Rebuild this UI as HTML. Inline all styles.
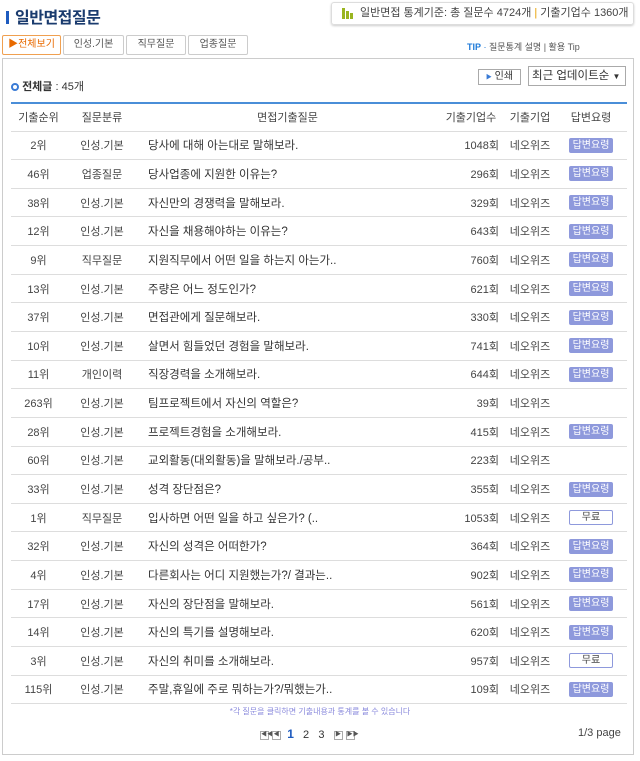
<!DOCTYPE html><html><head><meta charset="utf-8"><style>
*{margin:0;padding:0;box-sizing:border-box}
body{width:640px;height:761px;background:#fff;font-family:"Liberation Sans","Noto Sans CJK KR",sans-serif;color:#333;position:relative;overflow:hidden;font-size:11px}
.a{position:absolute}
.title{left:6px;top:4px;font-size:16px;font-weight:bold;color:#1a3b6e;letter-spacing:-0.5px}
.title:before{content:"";display:inline-block;width:3px;height:13px;background:#1e5bbf;margin-right:6px;vertical-align:-1px}
.stat{left:331px;top:2px;width:303px;height:23px;border:1px solid #ddd;border-radius:3px;box-shadow:0 1px 2px #ccc;font-size:11px;line-height:21px;padding-left:28px;color:#444;white-space:nowrap}
.tab{top:35px;height:20px;border:1px solid #ccc;border-radius:2px;font-size:10px;text-align:center;line-height:18px;color:#555}
.panel{left:2px;top:58px;width:632px;height:697px;border:1px solid #ccc}
table{position:absolute;left:11px;top:102px;width:616px;border-collapse:collapse;border-top:2px solid #4a8ed8}
th{height:28px;font-weight:normal;font-size:11px;color:#444;border-bottom:1px solid #ddd;background:#fff}
td{height:28.65px;border-bottom:1px solid #ddd;font-size:11px;color:#444;text-align:center}
td.q{text-align:left;padding-left:10px;font-size:11.5px;color:#333}
td.n{text-align:right;padding-right:6px}
.b{display:inline-block;width:44px;height:15px;line-height:15px;font-size:10px;border-radius:2px;background:#8e99dc;color:#fff;vertical-align:middle}
.f{background:#fff;border:1px solid #8e99dc;color:#444;line-height:13px}
.pg{display:inline-block;width:9px;height:9px;border:1px solid #aaa;font-size:6px;line-height:7px;text-align:center;color:#555;vertical-align:middle}
</style></head><body>
<div class="a title">일반면접질문</div>
<div class="a stat"><span class="a" style="left:10px;top:5px;width:3px;height:11px;background:#9ab520"></span><span class="a" style="left:14px;top:8px;width:3px;height:8px;background:#9ab520"></span><span class="a" style="left:18px;top:10px;width:3px;height:6px;background:#9ab520"></span>일반면접 통계기준: 총 질문수 4724개 <span style="color:#e8a000">|</span> 기출기업수 1360개</div>
<div class="a tab" style="left:2px;width:59px;border-color:#f0a050;color:#e86a00">▶전체보기</div>
<div class="a tab" style="left:63px;width:61px">인성.기본</div>
<div class="a tab" style="left:126px;width:60px">직무질문</div>
<div class="a tab" style="left:188px;width:60px">업종질문</div>
<div class="a" style="left:467px;top:40px;font-size:9px;color:#555"><b style="color:#1e7ad8">TIP</b> <span style="color:#1e7ad8">·</span> 질문통계 설명 | 활용 Tip</div>
<div class="a panel"></div>
<div class="a" style="left:11px;top:78px;font-size:11px"><span style="display:inline-block;width:8px;height:8px;border:2px solid #3a7bd5;border-radius:50%;vertical-align:-1px"></span> <b>전체글</b> : 45개</div>
<div class="a" style="left:478px;top:69px;width:43px;height:16px;border:1px solid #aaa;font-size:10px;line-height:14px;text-align:center"><span style="color:#3a7bd5;font-size:6px">▶</span> 인쇄</div>
<div class="a" style="left:528px;top:66px;width:98px;height:20px;border:1px solid #aaa;font-size:11.5px;line-height:18px;padding-left:3px;white-space:nowrap;overflow:hidden">최근 업데이트순 <span style="font-size:8px">▼</span></div>
<table>
<tr><th style="width:55px">기출순위</th><th style="width:72px">질문분류</th><th>면접기출질문</th><th style="width:68px">기출기업수</th><th style="width:50px">기출기업</th><th style="width:72px">답변요령</th></tr>
<tr><td>2위</td><td>인성.기본</td><td class="q">당사에 대해 아는대로 말해보라.</td><td class="n">1048회</td><td>네오위즈</td><td><span class="b">답변요령</span></td></tr>
<tr><td>46위</td><td>업종질문</td><td class="q">당사업종에 지원한 이유는?</td><td class="n">296회</td><td>네오위즈</td><td><span class="b">답변요령</span></td></tr>
<tr><td>38위</td><td>인성.기본</td><td class="q">자신만의 경쟁력을 말해보라.</td><td class="n">329회</td><td>네오위즈</td><td><span class="b">답변요령</span></td></tr>
<tr><td>12위</td><td>인성.기본</td><td class="q">자신을 채용해야하는 이유는?</td><td class="n">643회</td><td>네오위즈</td><td><span class="b">답변요령</span></td></tr>
<tr><td>9위</td><td>직무질문</td><td class="q">지원직무에서 어떤 일을 하는지 아는가..</td><td class="n">760회</td><td>네오위즈</td><td><span class="b">답변요령</span></td></tr>
<tr><td>13위</td><td>인성.기본</td><td class="q">주량은 어느 정도인가?</td><td class="n">621회</td><td>네오위즈</td><td><span class="b">답변요령</span></td></tr>
<tr><td>37위</td><td>인성.기본</td><td class="q">면접관에게 질문해보라.</td><td class="n">330회</td><td>네오위즈</td><td><span class="b">답변요령</span></td></tr>
<tr><td>10위</td><td>인성.기본</td><td class="q">살면서 힘들었던 경험을 말해보라.</td><td class="n">741회</td><td>네오위즈</td><td><span class="b">답변요령</span></td></tr>
<tr><td>11위</td><td>개인이력</td><td class="q">직장경력을 소개해보라.</td><td class="n">644회</td><td>네오위즈</td><td><span class="b">답변요령</span></td></tr>
<tr><td>263위</td><td>인성.기본</td><td class="q">팀프로젝트에서 자신의 역할은?</td><td class="n">39회</td><td>네오위즈</td><td></td></tr>
<tr><td>28위</td><td>인성.기본</td><td class="q">프로젝트경험을 소개해보라.</td><td class="n">415회</td><td>네오위즈</td><td><span class="b">답변요령</span></td></tr>
<tr><td>60위</td><td>인성.기본</td><td class="q">교외활동(대외활동)을 말해보라./공부..</td><td class="n">223회</td><td>네오위즈</td><td></td></tr>
<tr><td>33위</td><td>인성.기본</td><td class="q">성격 장단점은?</td><td class="n">355회</td><td>네오위즈</td><td><span class="b">답변요령</span></td></tr>
<tr><td>1위</td><td>직무질문</td><td class="q">입사하면 어떤 일을 하고 싶은가? (..</td><td class="n">1053회</td><td>네오위즈</td><td><span class="b f">무료</span></td></tr>
<tr><td>32위</td><td>인성.기본</td><td class="q">자신의 성격은 어떠한가?</td><td class="n">364회</td><td>네오위즈</td><td><span class="b">답변요령</span></td></tr>
<tr><td>4위</td><td>인성.기본</td><td class="q">다른회사는 어디 지원했는가?/ 결과는..</td><td class="n">902회</td><td>네오위즈</td><td><span class="b">답변요령</span></td></tr>
<tr><td>17위</td><td>인성.기본</td><td class="q">자신의 장단점을 말해보라.</td><td class="n">561회</td><td>네오위즈</td><td><span class="b">답변요령</span></td></tr>
<tr><td>14위</td><td>인성.기본</td><td class="q">자신의 특기를 설명해보라.</td><td class="n">620회</td><td>네오위즈</td><td><span class="b">답변요령</span></td></tr>
<tr><td>3위</td><td>인성.기본</td><td class="q">자신의 취미를 소개해보라.</td><td class="n">957회</td><td>네오위즈</td><td><span class="b f">무료</span></td></tr>
<tr><td>115위</td><td>인성.기본</td><td class="q">주말,휴일에 주로 뭐하는가?/뭐했는가..</td><td class="n">109회</td><td>네오위즈</td><td><span class="b">답변요령</span></td></tr>
</table>
<div class="a" style="left:0;width:640px;top:706px;text-align:center;font-size:8px;color:#8a8adc">*각 질문을 클릭하면 기출내용과 통계를 볼 수 있습니다</div>
<div class="a" style="left:260px;top:727px;font-size:11px"><span class="pg">◀◀</span> <span class="pg">◀</span> &nbsp;<b style="color:#1e5bbf;font-size:12px">1</b> &nbsp; 2 &nbsp; 3 &nbsp; <span class="pg">▶</span> <span class="pg">▶▶</span></div>
<div class="a" style="left:578px;top:727px;font-size:11px;color:#444">1/3 page</div>
</body></html>
